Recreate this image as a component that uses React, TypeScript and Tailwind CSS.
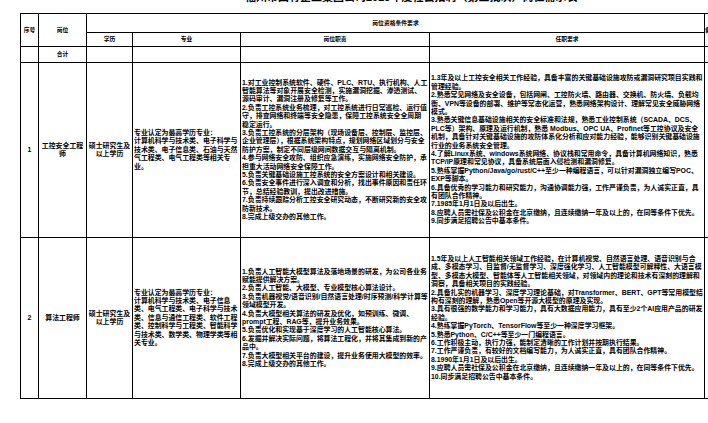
const duty1 = [
  "1.对工业控制系统软件、硬件、PLC、RTU、执行机构、人工智能算法等对象开展安全检测，实施漏洞挖掘、渗透测试、源码审计、漏洞注册及修复等工作。",
  "2.负责工控系统业务梳理，对工控系统进行日常巡检、运行值守，排查网络和终端等安全隐患，保障工控系统安全全周期稳定运行。",
  "3.负责工控系统的分层架构（现场设备层、控制层、监控层、企业管理层），根据系统架构特点，规划网络区域划分与安全防护方案，制定不同层级网间数据交互与隔离机制。",
  "4.参与网络安全攻防、组织应急演练，实施网络安全防护，承担重大活动网络安全保障工作。",
  "5.负责关键基础设施工控系统的安全方案设计和相关建设。",
  "6.负责安全事件进行深入调查和分析，找出事件原因和责任环节，总结经验教训，提出改进措施。",
  "7.负责持续跟踪分析工控安全研究动态，不断研究新的安全攻防新技术。",
  "8.完成上级交办的其他工作。",
];

const req1 = [
  "1.3年及以上工控安全相关工作经验，具备丰富的关键基础设施攻防或漏洞研究项目实践和管理经验。",
  "2.熟悉常见网络及安全设备，包括网闸、工控防火墙、路由器、交换机、防火墙、负载均衡、VPN等设备的部署、维护等常态化运营，熟悉网络架构设计、理解常见安全威胁网络模式。",
  "3.熟悉关键信息基础设施相关的安全标准和法规，熟悉工业控制系统（SCADA、DCS、PLC等）架构、原理及运行机制，熟悉 Modbus、OPC UA、Profinet等工控协议及安全机制，具备针对关键基础设施的攻防体系化分析和应对能力经验，能够识别关键基础设施行业的业务系统安全管理。",
  "4.了解Linux系统、windows系统网络、协议栈和常用命令，具备计算机网络知识，熟悉TCP/IP原理和常见协议，具备系统层面入侵检测和漏洞修复。",
  "5.熟练掌握Python/Java/go/rust/C++至少一种编程语言，可以针对漏洞独立编写POC、EXP等脚本。",
  "6.具备优秀的学习能力和研究能力，沟通协调能力强，工作严谨负责，为人诚实正直，具有团队合作精神。",
  "7.1985年1月1日及以后出生。",
  "8.应聘人员需社保及公积金在北京缴纳，且连续缴纳一年及以上的，在同等条件下优先。",
  "9.同步满足招聘公告中基本条件。",
];

const duty2 = [
  "1.负责人工智能大模型算法及落地场景的研发，为公司各业务赋能提供解决方案。",
  "2.负责人工智能、大模型、专业模型核心算法设计。",
  "3.负责机器视觉/语音识别/自然语言处理/时序预测/科学计算等领域模型开发。",
  "4.负责大模型相关算法的研发及优化，如预训练、微调、prompt工程、RAG等，提升业务效果。",
  "5.负责优化和实现基于深度学习的人工智能核心算法。",
  "6.发掘并解决实际问题，将算法工程化，并将其集成到新的产品中。",
  "7.负责大模型相关平台的建设，提升业务使用大模型的效率。",
  "8.完成上级交办的其他工作。",
];

const req2 = [
  "1.5年及以上人工智能相关领域工作经验，在计算机视觉、自然语言处理、语音识别与合成、多模态学习、自监督/无监督学习、深度强化学习、人工智能模型可解释性、大语言模型、多模态大模型、智能体等人工智能相关领域，对领域内的理论和技术有深刻的理解和洞察，具备相关项目的实践经验。",
  "2.具备扎实的机器学习、深度学习理论基础，对Transformer、BERT、GPT等常用模型结构有深刻的理解，熟悉Open等开源大模型的原理及实现。",
  "3.具有很强的数学能力和学习能力，具有大数据应用能力，具有至少2个AI应用产品的研发经验。",
  "4.熟练掌握PyTorch、TensorFlow等至少一种深度学习框架。",
  "5.熟悉Python、C/C++等至少一门编程语言。",
  "6.工作积极主动，执行力强，能制定清晰的工作计划并按期执行结果。",
  "7.工作严谨负责，有较好的文档编写能力，为人诚实正直，具有团队合作精神。",
  "8.1990年1月1日及以后出生。",
  "9.应聘人员需社保及公积金在北京缴纳，且连续缴纳一年及以上的，在同等条件下优先。",
  "10.同步满足招聘公告中基本条件。",
];

const cell = "border border-black align-middle px-[1px]";
const head = "border border-black align-middle px-0 text-center text-[5.8px] leading-[7px]";

function Lines({ items }: { items: string[] }) {
  return (
    <div className="flex flex-col">
      {items.map((t) => (
        <div key={t}>{t}</div>
      ))}
    </div>
  );
}

export default function App() {
  return (
    <div
      className="w-[708px] h-[423px] overflow-hidden bg-white text-black font-bold text-[6.9px] leading-[8.4px]"
      style={{ fontFamily: '"Liberation Sans", "Noto Sans CJK SC", sans-serif' }}
    >
      <div className="h-[13px] overflow-hidden">
        <div className="-mt-[9px] pl-[245px] text-[11px] leading-[12px] text-black">
          福州市国有企业集团公司2025年度社会招聘（第三批次）岗位需求表
        </div>
      </div>
      <table className="ml-[20px] table-fixed border-collapse w-[730px]">
        <colgroup>
          <col className="w-[18px]" />
          <col className="w-[48px]" />
          <col className="w-[46px]" />
          <col className="w-[108px]" />
          <col className="w-[189px]" />
          <col className="w-[275px]" />
          <col className="w-[46px]" />
        </colgroup>
        <tbody>
          <tr className="h-[19px]">
            <td rowSpan={2} className={head}>序号</td>
            <td rowSpan={2} className={head}>岗位</td>
            <td colSpan={4} className={head}>岗位资格条件要求</td>
            <td rowSpan={2} className={`${head} text-left`}>备注</td>
          </tr>
          <tr className="h-[14px]">
            <td className={head}>学历</td>
            <td className={head}>专业</td>
            <td className={head}>岗位职责</td>
            <td className={head}>任职要求</td>
          </tr>
          <tr className="h-[16px]">
            <td className={cell}></td>
            <td className={head}>合计</td>
            <td className={cell}></td>
            <td className={cell}></td>
            <td className={cell}></td>
            <td className={cell}></td>
            <td className={cell}></td>
          </tr>
          <tr className="h-[175px]">
            <td className={`${cell} text-center`}>1</td>
            <td className={`${cell} text-center`}>工控安全工程师</td>
            <td className={`${cell} text-center`}>硕士研究生及以上学历</td>
            <td className={cell}>
              <div>专业认定为最高学历专业：</div>
              <div>计算机科学与技术类、电子科学与技术类、电子信息类、石油与天然气工程类、电气工程类等相关专业。</div>
            </td>
            <td className={cell}>
              <Lines items={duty1} />
            </td>
            <td className={cell}>
              <Lines items={req1} />
            </td>
            <td className={cell}></td>
          </tr>
          <tr className="h-[161px]">
            <td className={`${cell} text-center`}>2</td>
            <td className={`${cell} text-center`}>算法工程师</td>
            <td className={`${cell} text-center`}>硕士研究生及以上学历</td>
            <td className={cell}>
              <div>专业认定为最高学历专业：</div>
              <div>计算机科学与技术类、电子信息类、电气工程类、电子科学与技术类、信息与通信工程类、软件工程类、控制科学与工程类、智能科学与技术类、数学类、物理学类等相关专业。</div>
            </td>
            <td className={cell}>
              <Lines items={duty2} />
            </td>
            <td className={cell}>
              <Lines items={req2} />
            </td>
            <td className={cell}></td>
          </tr>
        </tbody>
      </table>
    </div>
  );
}
